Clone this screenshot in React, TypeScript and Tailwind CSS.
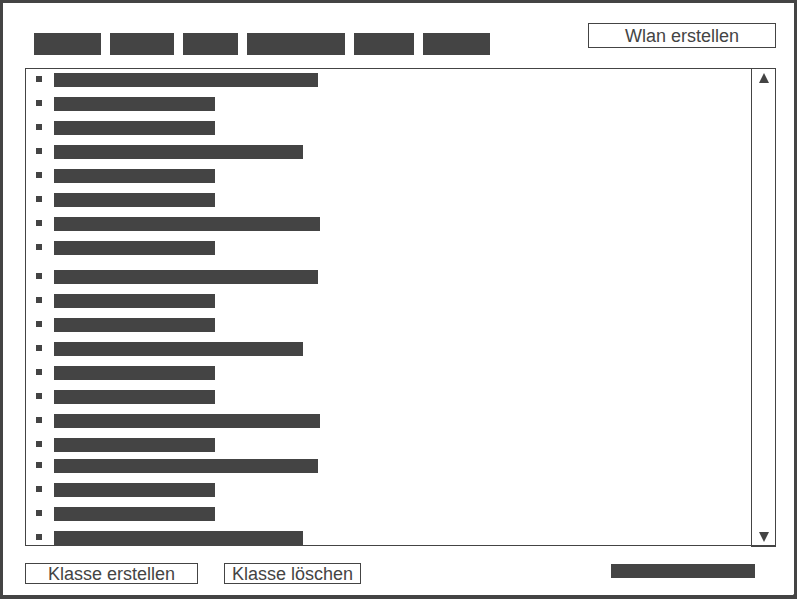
import React from "react";

const tabs = [67, 64, 55, 98, 60, 67];

type Row = { w: number; mt: string };
const rows: Row[] = [
  { w: 264, mt: "mt-0" },
  { w: 161, mt: "mt-[10px]" },
  { w: 161, mt: "mt-[10px]" },
  { w: 249, mt: "mt-[10px]" },
  { w: 161, mt: "mt-[10px]" },
  { w: 161, mt: "mt-[10px]" },
  { w: 266, mt: "mt-[10px]" },
  { w: 161, mt: "mt-[10px]" },
  { w: 264, mt: "mt-[15px]" },
  { w: 161, mt: "mt-[10px]" },
  { w: 161, mt: "mt-[10px]" },
  { w: 249, mt: "mt-[10px]" },
  { w: 161, mt: "mt-[10px]" },
  { w: 161, mt: "mt-[10px]" },
  { w: 266, mt: "mt-[10px]" },
  { w: 161, mt: "mt-[10px]" },
  { w: 264, mt: "mt-[7px]" },
  { w: 161, mt: "mt-[10px]" },
  { w: 161, mt: "mt-[10px]" },
  { w: 249, mt: "mt-[10px]" },
];

export default function App() {
  return (
    <div
      className="relative box-border w-[797px] h-[599px] bg-white border-t-[3px] border-l-[3px] border-r-[3px] border-b-[4px] border-[#444444] flex flex-col overflow-hidden"
      style={{ fontFamily: '"Liberation Sans", Arial, sans-serif' }}
    >
      {/* header */}
      <div className="flex justify-between h-[65px] shrink-0">
        <div className="flex gap-[9px] pt-[30px] pl-[31px]">
          {tabs.map((w, i) => (
            <div key={i} className="h-[22px] bg-[#444444]" style={{ width: w }} />
          ))}
        </div>
        <div className="mt-[20px] mr-[18px] box-border w-[188px] h-[25px] border border-[#444444] flex items-center justify-center text-[18px] leading-none text-[#444444]">
          Wlan erstellen
        </div>
      </div>

      {/* list */}
      <div className="ml-[22px] box-border w-[751px] h-[478px] border border-[#444444] flex shrink-0">
        <div className="flex-1 overflow-hidden flex flex-col pt-[4px] pl-[10px]">
          {rows.map((r, i) => (
            <div key={i} className={`flex items-start shrink-0 ${r.mt}`}>
              <div className="w-[6px] h-[6px] mt-[3px] bg-[#444444]" />
              <div className="h-[14px] ml-[12px] bg-[#444444]" style={{ width: r.w }} />
            </div>
          ))}
        </div>
        <div className="box-border w-[25px] border-l border-[#444444] -mr-px -mt-px -mb-[2px] border-r border-t border-b flex flex-col items-center justify-between pt-[4px] pb-[4px]">
          <svg width="10" height="10" viewBox="0 0 10 10" className="ml-[1px]">
            <polygon points="5,0 10,10 0,10" fill="#444444" />
          </svg>
          <svg width="10" height="10" viewBox="0 0 10 10" className="ml-[1px]">
            <polygon points="0,0 10,0 5,10" fill="#444444" />
          </svg>
        </div>
      </div>

      {/* bottom */}
      <div className="flex items-start pl-[22px] pt-[17px]">
        <div className="box-border w-[173px] h-[21px] border border-[#444444] flex items-center justify-center text-[18px] leading-none text-[#444444]">
          Klasse erstellen
        </div>
        <div className="ml-[26px] box-border w-[137px] h-[21px] border border-[#444444] flex items-center justify-center text-[18px] leading-none text-[#444444]">
          Klasse löschen
        </div>
        <div className="ml-[250px] mt-[1px] w-[144px] h-[14px] bg-[#444444]" />
      </div>

      <svg className="absolute right-[-3px] bottom-[-4px]" width="8" height="8" viewBox="0 0 8 8">
        <polygon points="8,0 8,8 0,8" fill="#222222" />
      </svg>
    </div>
  );
}
